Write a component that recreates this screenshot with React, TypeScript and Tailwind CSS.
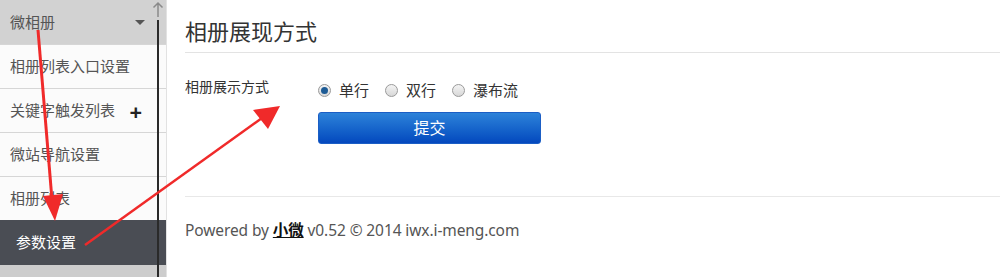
import React from "react";

const menu = [
    { label: "相册列表入口设置" },
    { label: "关键字触发列表", plus: true },
    { label: "微站导航设置" },
    { label: "相册列表" },
];

function Radio({ checked, label }: { checked?: boolean; label: string }) {
    return (
        <label className="flex items-center gap-[8px] mr-[16px]">
            <span className="w-[13px] h-[13px] rounded-full border border-[#9a9a9a] bg-gradient-to-b from-[#f4f4f4] to-[#d8d8d8] flex items-center justify-center">
                {checked && <span className="w-[7px] h-[7px] rounded-full bg-[#1d5b95]" />}
            </span>
            <span className="text-[15px] text-[#333]">{label}</span>
        </label>
    );
}

export default function App() {
    return (
        <div className="relative w-[1000px] h-[277px] overflow-hidden bg-white flex font-['Noto_Sans','Noto_Sans_CJK_SC',sans-serif]">
            {/* sidebar */}
            <div className="relative w-[167px] shrink-0 flex flex-col bg-[#cfcfcf] border-r border-[#e2e2e2]">
                <div className="h-[44px] flex items-center justify-between pl-[10px] pr-[21px] bg-[#d2d2d2] text-[15px] text-[#555]">
                    <span>微相册</span>
                    <span className="w-0 h-0 border-l-[5px] border-r-[5px] border-t-[5px] border-l-transparent border-r-transparent border-t-[#555]" />
                </div>
                {menu.map((m) => (
                    <div
                        key={m.label}
                        className="h-[44px] flex items-center justify-between pl-[10px] pr-[24px] bg-[#fbfbfb] border-t border-[#d6d6d6] text-[15px] text-[#555]"
                    >
                        <span>{m.label}</span>
                        {m.plus && <span className="text-[22px] font-bold text-[#222] leading-none">+</span>}
                    </div>
                ))}
                <div className="h-[45px] flex items-center pl-[16px] bg-[#4a4d54] text-[15px] text-white">参数设置</div>
                <div className="flex-1 bg-[#cdcdcd]" />
                {/* scroll marker */}
                <div className="absolute left-[152px] top-0 bottom-0 w-[12px] flex flex-col items-center">
                    <svg width="12" height="18" viewBox="0 0 12 18" className="mt-[1px]">
                        <path d="M6 16V2M1.5 6.5L6 2l4.5 4.5" fill="none" stroke="#8a8a8a" strokeWidth="1.5" />
                    </svg>
                    <div className="w-[2px] flex-1 bg-[#2a2a2a] mt-[1px]" />
                </div>
            </div>

            {/* main */}
            <div className="flex-1 flex flex-col pl-[18px]">
                <div className="h-[53px] border-b border-[#e3e3e3] flex items-center">
                    <h1 className="text-[22px] text-[#333] pt-[10px]">相册展现方式</h1>
                </div>
                <div className="flex pt-[23px]">
                    <div className="w-[133px] text-[14px] text-[#333]">相册展示方式</div>
                    <div className="flex flex-col">
                        <div className="flex items-center pt-[3px]">
                            <Radio checked label="单行" />
                            <Radio label="双行" />
                            <Radio label="瀑布流" />
                        </div>
                        <button className="mt-[10px] w-[223px] h-[32px] rounded-[3px] border border-[#1b5ec5] bg-gradient-to-b from-[#2d82d9] to-[#0548be] text-white text-[16px]">
                            提交
                        </button>
                    </div>
                </div>
                <div className="mt-[52px] border-t border-[#e8e8e8]" />
                <div className="pt-[22px] text-[15.5px] text-[#555] tracking-[-0.1px]">
                    Powered by <a className="text-[#111] font-bold underline">小微</a> v0.52 © 2014 iwx.i-meng.com
                </div>
            </div>

            {/* annotation arrows */}
            <svg className="absolute left-0 top-0 pointer-events-none" width="1000" height="277" viewBox="0 0 1000 277">
                <line x1="38" y1="30" x2="52" y2="200" stroke="#f02a2a" strokeWidth="3" />
                <polygon points="43,196 63,194 55,221" fill="#f02a2a" />
                <line x1="85" y1="245" x2="262" y2="118" stroke="#f02a2a" strokeWidth="2.5" />
                <polygon points="253,110 268,129 280,106" fill="#f02a2a" />
            </svg>
        </div>
    );
}
